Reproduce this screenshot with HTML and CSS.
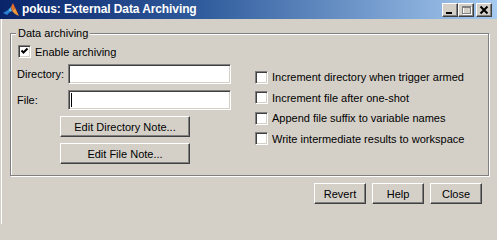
FILE: index.html
```html
<!DOCTYPE html>
<html>
<head>
<meta charset="utf-8">
<link rel="stylesheet" href="styles.css">
</head>
<body>
<div class="window">
  <div class="titlebar">
    <svg class="app-icon" width="16" height="16" viewBox="0 0 16 16">
      <path d="M0 11 L5 8 L7 10 L4 13 Z" fill="#2a7fd0"/>
      <path d="M5 8 L8 5 L9 9 L7 10 Z" fill="#4fb3e8"/>
      <path d="M8 5 L10 1 L12 6 L9 9 Z" fill="#e8702a"/>
      <path d="M10 1 L13 7 L16 14 L12 6 Z" fill="#c0401a"/>
      <path d="M9 9 L12 6 L16 14 L12 12 Z" fill="#f29a3a"/>
    </svg>
    <span class="title">pokus: External Data Archiving</span>
    <div class="caption-buttons">
      <span class="cbtn"><svg width="14" height="12" viewBox="0 0 14 12"><rect x="3" y="8" width="6" height="2" fill="#000"/></svg></span>
      <span class="cbtn"><svg width="14" height="12" viewBox="0 0 14 12"><rect x="3.5" y="2.5" width="8" height="7" fill="none" stroke="#fff" transform="translate(1 1)"/><rect x="3.5" y="2.5" width="8" height="7" fill="none" stroke="#808080"/><rect x="3" y="2" width="9" height="2" fill="#808080"/></svg></span>
      <span class="cbtn close"><svg width="14" height="12" viewBox="0 0 14 12"><path d="M3.5 2.5 L10.5 9.5 M10.5 2.5 L3.5 9.5" stroke="#000" stroke-width="2"/></svg></span>
    </div>
  </div>
  <div class="content">
    <fieldset class="group">
      <legend>Data archiving</legend>
      <div class="columns">
        <div class="left">
          <label class="check-row first">
            <span class="box"><svg width="9" height="9" viewBox="0 0 9 9"><path d="M1.5 3.5 L3.5 5.5 L7.5 1.5" fill="none" stroke="#000" stroke-width="2"/></svg></span>
            <span>Enable archiving</span>
          </label>
          <div class="field-row">
            <span class="field-label">Directory:</span>
            <span class="input"></span>
          </div>
          <div class="field-row">
            <span class="field-label">File:</span>
            <span class="input"><span class="caret"></span></span>
          </div>
          <div class="btn-row"><span class="btn wide">Edit Directory Note...</span></div>
          <div class="btn-row"><span class="btn wide">Edit File Note...</span></div>
        </div>
        <div class="right">
          <label class="check-row opt"><span class="box"></span><span>Increment directory when trigger armed</span></label>
          <label class="check-row opt"><span class="box"></span><span>Increment file after one-shot</span></label>
          <label class="check-row opt"><span class="box"></span><span>Append file suffix to variable names</span></label>
          <label class="check-row opt"><span class="box"></span><span>Write intermediate results to workspace</span></label>
        </div>
      </div>
    </fieldset>
    <div class="actions">
      <span class="btn small">Revert</span>
      <span class="btn small">Help</span>
      <span class="btn small">Close</span>
    </div>
  </div>
</div>
</body>
</html>
```
FILE: styles.css
```css
html, body {
  margin: 0;
  padding: 0;
  background: #d4d0c8;
  height: 224px;
  overflow: hidden;
}
body {
  font-family: "Liberation Sans", Arial, sans-serif;
  font-size: 11px;
  color: #000;
}
.window {
  width: 497px;
  height: 224px;
  display: flex;
  flex-direction: column;
  overflow: hidden;
}
.titlebar {
  height: 19px;
  flex: none;
  display: flex;
  align-items: center;
  background: linear-gradient(to right, #0a246a 0%, #2f5b9c 40%, #a6caf0 100%);
  color: #fff;
  padding: 0 5px 0 3px;
}
.app-icon {
  flex: none;
  margin-right: 3px;
}
.title {
  font-weight: bold;
  font-size: 12px;
  line-height: 19px;
  letter-spacing: -0.1px;
  white-space: nowrap;
}
.caption-buttons {
  margin-left: auto;
  display: flex;
  align-items: center;
}
.cbtn {
  width: 16px;
  height: 14px;
  box-sizing: border-box;
  background: #d4d0c8;
  border: 1px solid;
  border-color: #fff #404040 #404040 #fff;
  box-shadow: inset -1px -1px #808080;
  display: flex;
}
.cbtn svg { display: block; }
.cbtn.close { margin-left: 2px; }
.content {
  flex: 1;
  padding-top: 8px;
  box-shadow: inset 1px 0 #d4d0c8, inset 2px 0 #fff;
}
.group {
  margin: 0 8px 0 10px;
  padding: 0 6px 11px 6px;
  border: 1px solid #808080;
  box-shadow: inset 1px 1px 0 #fff, 1px 1px 0 #fff;
  min-width: 0;
}
.group legend {
  padding: 0 2px;
  margin-left: -1px;
  line-height: 13px;
  background: #d4d0c8;
}
.columns {
  display: flex;
}
.left {
  width: 214px;
  flex: none;
  display: flex;
  flex-direction: column;
}
.check-row {
  display: flex;
  align-items: center;
  white-space: nowrap;
}
.check-row.first {
  height: 13px;
  margin-top: 5px;
  margin-left: 1px;
}
.box {
  width: 13px;
  height: 13px;
  box-sizing: border-box;
  flex: none;
  background: #fff;
  border: 1px solid;
  border-color: #808080 #fff #fff #808080;
  box-shadow: inset 1px 1px #404040, inset -1px -1px #d4d0c8;
  margin-right: 4px;
  display: flex;
  align-items: center;
  justify-content: center;
}
.box svg { display: block; }
.field-row {
  display: flex;
  align-items: center;
  margin-top: 6px;
}
.field-label {
  width: 51px;
  flex: none;
}
.input {
  width: 163px;
  height: 20px;
  box-sizing: border-box;
  background: #fff;
  border: 1px solid;
  border-color: #808080 #fff #fff #808080;
  box-shadow: inset 1px 1px #404040, inset -1px -1px #d4d0c8;
  display: flex;
  align-items: center;
  padding-left: 2px;
}
.caret {
  width: 1px;
  height: 14px;
  background: #000;
}
.btn-row {
  margin-top: 6px;
  padding-left: 43px;
}
.btn {
  display: flex;
  align-items: center;
  justify-content: center;
  box-sizing: border-box;
  height: 21px;
  background: #d4d0c8;
  border: 1px solid;
  border-color: #fff #404040 #404040 #fff;
  box-shadow: inset -1px -1px #808080;
  white-space: nowrap;
}
.btn.wide { width: 130px; }
.btn.small { width: 52px; }
.right {
  margin-left: 24px;
  padding-top: 27px;
  display: flex;
  flex-direction: column;
}
.check-row.opt {
  height: 20.5px;
}
.actions {
  display: flex;
  justify-content: flex-end;
  gap: 6px;
  margin-top: 7px;
  padding-right: 15px;
}
```
